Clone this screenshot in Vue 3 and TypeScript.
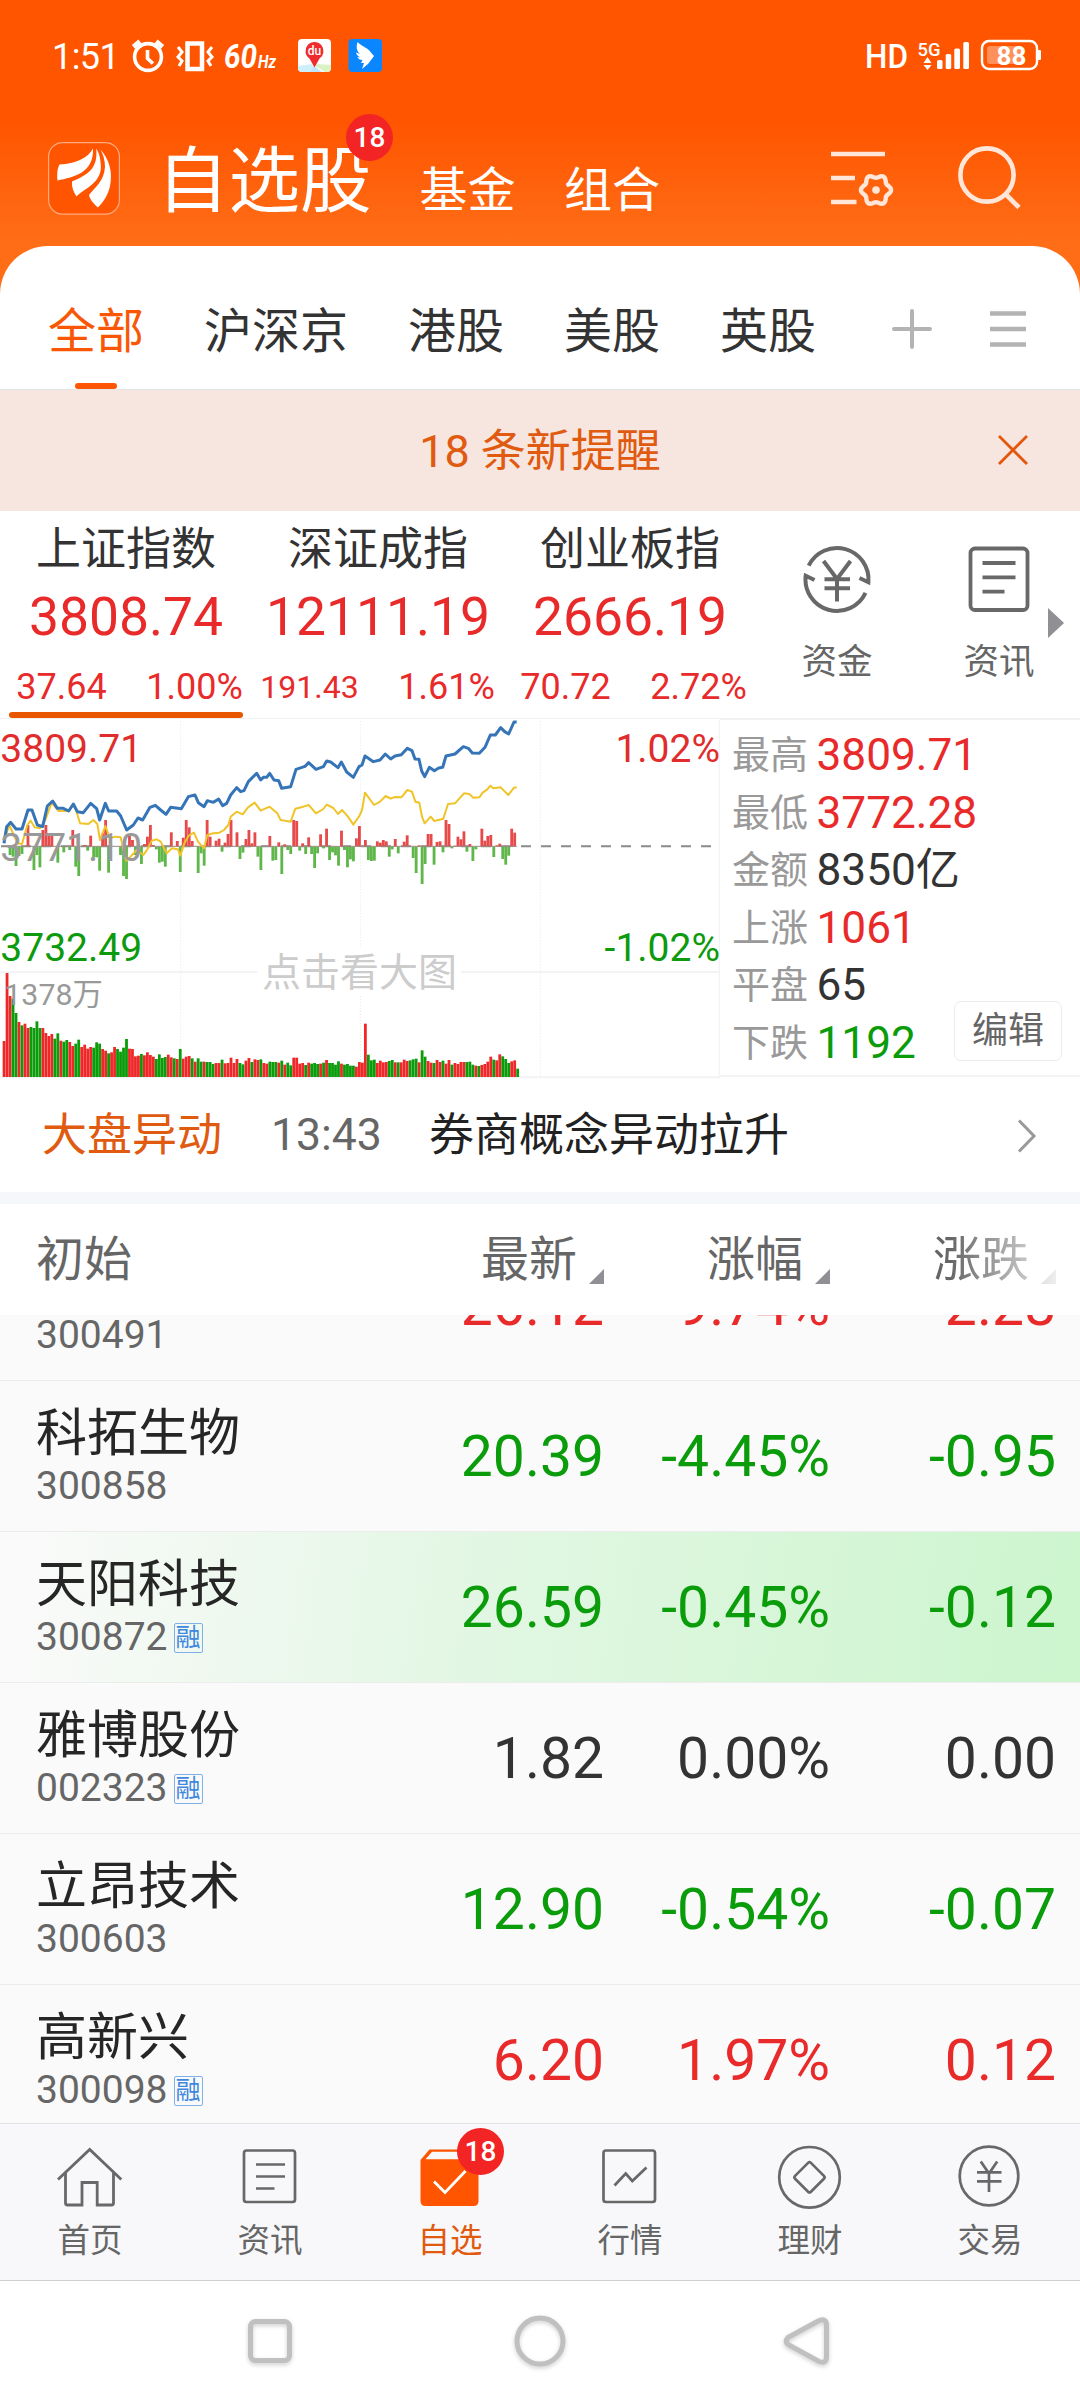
<script setup lang="ts">
interface Tone {
  tone: 'up' | 'down' | 'flat'
}
interface IndexQuote {
  name: string
  value: string
  diff: string
  pct: string
  small?: boolean
}
interface Stat extends Tone {
  label: string
  value: string
}
interface Stock extends Tone {
  name: string
  code: string
  margin?: boolean
  price: string
  pct: string
  diff: string
  flash?: boolean
}

const groups: string[] = ['全部', '沪深京', '港股', '美股', '英股']

const indices: IndexQuote[] = [
  { name: '上证指数', value: '3808.74', diff: '37.64', pct: '1.00%' },
  { name: '深证成指', value: '12111.19', diff: '191.43', pct: '1.61%', small: true },
  { name: '创业板指', value: '2666.19', diff: '70.72', pct: '2.72%' },
]

const stats: Stat[] = [
  { label: '最高', value: '3809.71', tone: 'up' },
  { label: '最低', value: '3772.28', tone: 'up' },
  { label: '金额', value: '8350亿', tone: 'flat' },
  { label: '上涨', value: '1061', tone: 'up' },
  { label: '平盘', value: '65', tone: 'flat' },
  { label: '下跌', value: '1192', tone: 'down' },
]

const stocks: Stock[] = [
  { name: '', code: '300491', price: '26.12', pct: '9.74%', diff: '2.28', tone: 'up' },
  { name: '科拓生物', code: '300858', price: '20.39', pct: '-4.45%', diff: '-0.95', tone: 'down' },
  { name: '天阳科技', code: '300872', margin: true, price: '26.59', pct: '-0.45%', diff: '-0.12', tone: 'down', flash: true },
  { name: '雅博股份', code: '002323', margin: true, price: '1.82', pct: '0.00%', diff: '0.00', tone: 'flat' },
  { name: '立昂技术', code: '300603', price: '12.90', pct: '-0.54%', diff: '-0.07', tone: 'down' },
  { name: '高新兴', code: '300098', margin: true, price: '6.20', pct: '1.97%', diff: '0.12', tone: 'up' },
]

// Width of one trading minute in chart units (240 minutes across the plot).
const MINUTE = 8.958

// Per-minute turnover; a trailing g marks a falling minute.
const volume = (
  '108 312 243 235g 192g 165 155g 160 147 150g 147g 167g 147g 147 132 123 129 115g 131g 109 106g 111g 105 93 100g 112g 90 97 85 90 ' +
  '88g 104g 100g 84 79 71g 74 90 84g 76g 88g 114g 85 84 62 64 69g 65 74 66 61 54g 68g 57g 60g 67 59 56g 54 84g 55 61 63 56g 46 56g ' +
  '46g 46 45g 45g 39g 42 42 52g 41 42 58 42 54 42g 38g 49 57 45g 53 51 53g 42 40 46g 45g 45g 43 49g 37 43g 35g 58 58 40 42 36g 43 ' +
  '40g 42g 39g 40 43g 51 42g 42g 37g 47g 40 37g 39g 34g 34g 31 45 43 160 67g 50g 52g 42 49 44 45 48g 51g 44 44g 44 52 48 50g 53g ' +
  '55g 44 80g 61g 48 43 42g 51 45 49g 40 51 37g 42 39 45 45 45g 46g 37g 34 33g 36 39 46 61 52g 50 68 62g 54g 42g 47 50 25g'
)
  .split(' ')
  .map((token, i) => ({ x: 8 + MINUTE * i, h: parseInt(token), down: token.endsWith('g') }))

// Net momentum around the previous close.
const momentum = (
  '0 0 -25 -30 -58 -28 -22 0 65 0 -70 -25 -62 50 65 40 32 0 -48 0 -17 0 -10 50 -60 -88 0 5 -12 33 -32 -32 -72 40 80 -78 0 0 0 -25 ' +
  '-88 -97 32 20 -25 0 -52 8 30 65 5 -8 -48 -45 -60 0 43 0 17 -76 27 80 58 17 0 -79 -20 -57 80 30 0 18 24 -15 12 38 80 0 43 -37 -18 ' +
  '23 50 10 43 -30 -70 0 0 32 -42 -40 13 -82 7 -10 -22 80 77 -12 10 -22 28 -22 -64 -20 37 -5 54 -40 -17 -26 -57 48 -10 -62 -38 -44 ' +
  '25 62 0 20 -40 -43 -42 16 12 20 16 -30 -8 23 -20 0 15 34 0 -34 -79 4 -112 -52 38 38 -54 14 16 -17 80 68 -5 3 30 22 46 -15 8 -43 ' +
  '-8 0 54 18 32 35 -31 4 9 -37 -54 -27 54 42'
)
  .split(' ')
  .map(Number)
  .map((v, i) => ({ x: 8 + MINUTE * i, v }))
  .filter((bar) => bar.v !== 0)

const priceLine =
  '12,400 20,350 32,337 48,357 66,357 84,300 96,300 112,345 128,350 142,288 158,273 172,295 190,295 206,303 220,282 232,305 250,308 ' +
  '272,280 290,296 299,330 316,280 326,303 350,303 362,318 380,360 400,345 414,324 428,330 450,292 466,286 482,300 498,313 512,292 ' +
  '544,296 565,260 585,255 595,278 612,290 622,272 640,277 656,267 668,287 680,280 692,255 710,233 722,245 732,242 745,215 770,190 ' +
  '782,210 790,202 800,202 809,190 822,210 836,212 845,235 872,230 888,178 915,169 926,158 948,178 970,170 980,153 992,156 1014,173 ' +
  '1024,156 1040,186 1060,202 1077,170 1086,165 1095,138 1120,155 1140,150 1156,132 1172,147 1185,138 1204,134 1222,115 1236,122 ' +
  '1245,147 1257,148 1265,183 1274,200 1288,172 1303,182 1316,174 1328,172 1338,138 1365,132 1390,110 1405,115 1417,129 1438,130 ' +
  '1455,112 1471,75 1486,75 1502,53 1514,65 1526,72 1542,36 1550,36'

const averageLine =
  '12,392 28,345 40,372 52,400 66,402 82,345 92,332 104,352 120,355 136,330 155,278 176,303 206,303 220,285 228,300 240,340 265,342 ' +
  '280,330 292,342 300,390 316,348 330,385 345,380 362,382 376,445 380,452 392,440 410,420 430,435 442,418 455,392 470,388 482,395 ' +
  '500,430 516,415 534,418 541,437 553,400 566,377 582,368 594,395 612,415 622,375 640,370 658,368 672,360 685,345 692,320 710,305 ' +
  '728,313 744,292 764,278 782,302 809,290 832,310 842,330 872,335 886,296 910,290 926,285 948,310 970,297 980,284 1000,294 ' +
  '1014,312 1026,300 1044,320 1060,344 1078,318 1086,300 1095,248 1122,285 1140,275 1157,258 1172,266 1185,261 1204,262 1222,240 ' +
  '1236,245 1246,275 1258,278 1266,320 1274,340 1292,320 1303,333 1330,326 1344,282 1365,280 1392,250 1408,252 1420,263 1438,262 ' +
  '1448,248 1462,238 1471,227 1480,235 1502,232 1525,255 1542,233 1550,232'

// Six-lobed outline of the settings gear.
const gear = Array.from({ length: 72 }, (_, i) => {
  const a = (i * Math.PI) / 36
  const r = 13.5 + 1.6 * Math.cos(6 * a)
  return `${(876 + r * Math.cos(a)).toFixed(2)},${(190 + r * 1.02 * Math.sin(a)).toFixed(2)}`
}).join(' ')
</script>

<template>
  <div class="app">
    <header class="hero">
      <div class="status">
        <span class="clock">1:51</span>
        <svg class="st-left" width="270" height="40" viewBox="128 36 270 40">
          <g fill="none" stroke="#fff" stroke-width="3.6">
            <circle cx="148" cy="57" r="13.4" />
            <path d="M147.500 50v8.500l5.500 5" />
            <path d="M133.500 47l6.500-5.500M162.500 47l-6.500-5.500" stroke-width="5" />
            <rect x="187.500" y="43.500" width="14.500" height="25.500" stroke-width="4.500" />
            <path d="M178 47l4 5-4 5 4 4-3 5M212 47l-4 5 4 5-4 4 3 5" stroke-width="3" />
          </g>
          <text x="224" y="68" class="hz" font-size="34" textLength="33" lengthAdjust="spacingAndGlyphs">60</text>
          <text x="258" y="68" class="hz" font-size="18" textLength="18" lengthAdjust="spacingAndGlyphs">Hz</text>
          <rect x="298" y="39" width="33" height="33" rx="4" fill="#fff" />
          <path d="M298 66l14-2 4 8h-14q-4 0-4-4z" fill="#cdeefb" />
          <path d="M331 65l-14-1-2 2 10 6h2q4 0 4-4z" fill="#d9f3c4" />
          <path d="M310 72l4-6 8 6z" fill="#bfe6fb" />
          <path d="M314.500 67.500l-5-9a9 9 0 1 1 10 0z" fill="#ef2b2d" />
          <text x="314.500" y="55" class="du" text-anchor="middle">du</text>
          <rect x="348.500" y="39" width="33.500" height="33" rx="4" fill="#0a87ff" />
          <path d="M357.500 42c5 5 12 7 13 10l3.500 4-6 8-6 5 2-6h-3l1.500-3q-4 0-5-3l3 .5q-4-2-4.500-5l4 1.500q-5-4-2.500-12z" fill="#fff" />
        </svg>
        <span class="push"></span>
        <svg class="st-right" width="180" height="40" viewBox="864 36 180 40">
          <text x="865" y="68" class="hd" font-size="34" textLength="43" lengthAdjust="spacingAndGlyphs">HD</text>
          <text x="917.500" y="55.500" class="hd" font-size="18.500" textLength="23" lengthAdjust="spacingAndGlyphs">5G</text>
          <g fill="#fff">
            <path d="M923.500 63l4-6 4 6zM923.500 65h8l-4 5z" />
            <rect x="937" y="60" width="5.500" height="9" rx="1.500" />
            <rect x="945.700" y="54" width="5.500" height="15" rx="1.500" />
            <rect x="954.300" y="48.500" width="5.700" height="20.500" rx="1.500" />
            <rect x="963.300" y="42" width="5.700" height="27" rx="1.500" />
            <rect x="1037.500" y="50" width="3.500" height="10" rx="1" />
            <rect x="987" y="46" width="36" height="18" rx="3" opacity=".35" />
          </g>
          <rect x="982" y="41" width="55" height="28" rx="7" fill="none" stroke="#fff" stroke-width="2.400" />
          <text x="996.500" y="65" class="bat">88</text>
        </svg>
      </div>

      <div class="titlebar">
        <svg class="logo" width="72" height="73" viewBox="0 0 72 73">
          <rect x=".6" y=".6" width="70.800" height="71.500" rx="14" fill="#ff5500" stroke="#ffab80" stroke-width="1.200" />
          <g fill="#fff">
            <path d="M45 6.500C41 15 28 22 11.500 22.500C9 27 9 33 9.500 38.500C26 35 46 31 45 6.500z" />
            <path d="M48.200 6.500C50 25 42 32 24 39.500C23.500 45 25.500 50 28.500 54.500C36 46 56 41 52.500 20C52 14 50.500 10 48.200 6.500z" />
            <path d="M52.500 7.500C61 17 65 30 62 44C60 53 56 59 50 65.500C46 62 42 58 41 53C46 46 56 40 57 25C57 18 55 12 52.500 7.500z" />
          </g>
        </svg>
        <div class="main-title">自选股<span class="badge">18</span></div>
        <span class="sub-title">基金</span>
        <span class="sub-title">组合</span>
        <span class="push"></span>
        <svg width="64" height="60" viewBox="831 148 64 60" fill="none" stroke="#ffe6d8" stroke-width="4.400">
          <path d="M831 154h54M831 178h24M831 202h25.500" />
          <polygon :points="gear" stroke-linejoin="round" />
          <circle cx="876" cy="190" r="3.800" fill="#ffe6d8" stroke="none" />
        </svg>
        <svg class="search" width="64" height="66" viewBox="957 144 64 66" fill="none" stroke="#ffe6d8" stroke-width="4.600">
          <circle cx="987" cy="175" r="26.600" />
          <path d="M1005.500 194l13.500 13.500" />
        </svg>
      </div>
    </header>

    <nav class="groups">
      <span v-for="(g, i) in groups" :key="g" class="group" :class="{ on: i === 0 }">{{ g }}</span>
      <span class="push"></span>
      <svg width="40" height="40" viewBox="0 0 40 40" stroke="#b3b3b3" stroke-width="4" stroke-linecap="round"><path d="M2 20h36M20 2v36" /></svg>
      <svg class="burger" width="38" height="40" viewBox="0 0 38 40" stroke="#b3b3b3" stroke-width="4.600"><path d="M1 4.500h36M1 20h36M1 35.500h36" /></svg>
    </nav>

    <div class="alert">
      <span>18 条新提醒</span>
      <svg class="close" width="32" height="32" viewBox="0 0 32 32" stroke="#e4570b" stroke-width="2.800"><path d="M2 2l28 28M30 2L2 30" /></svg>
    </div>

    <section class="indices">
      <div v-for="(q, i) in indices" :key="q.name" class="index" :class="{ on: i === 0 }">
        <div class="index-name">{{ q.name }}</div>
        <div class="index-value">{{ q.value }}</div>
        <div class="index-sub">
          <span :class="{ small: q.small }">{{ q.diff }}</span>
          <span>{{ q.pct }}</span>
        </div>
      </div>
      <div class="tool">
        <svg width="72" height="72" viewBox="0 0 72 72" fill="none" stroke="#686868" stroke-width="4">
          <path d="M7.700 22.700A31.500 31.500 0 0 1 67.400 39.200L58.500 35" />
          <path d="M64.500 49.800A31.500 31.500 0 0 1 4.700 32.700L13.500 37" />
          <path d="M22.500 18L36 36L49.500 18M23.500 36.300h25.500M23.500 45.300h25.500M36 36v22.500" />
        </svg>
        <span>资金</span>
      </div>
      <div class="tool second">
        <svg width="72" height="72" viewBox="0 0 72 72" fill="none" stroke="#686868" stroke-width="3.800">
          <rect x="7.500" y="5.500" width="57" height="61.500" rx="4.500" />
          <path d="M19.500 20h33M19.500 34.300h33M19.500 48.700h22" />
        </svg>
        <span>资讯</span>
      </div>
      <svg class="more" width="16" height="30" viewBox="0 0 16 30"><path d="M0 0l16 15L0 30z" fill="#8f8f94" /></svg>
    </section>

    <section class="market">
      <svg class="chart" width="720" height="361" viewBox="0 27 2160 1083">
        <g fill="none" stroke="#f3f3f5" stroke-width="6">
          <path d="M0 786H772M1382 786H2160M0 1102H2160M2159 30V1102" />
        </g>
        <g stroke="#e6e6e6" stroke-width="3" stroke-dasharray="3 6">
          <path d="M542 34V1098M1081 34V715M1081 858V1098M1621 34V1098" />
        </g>
        <path d="M3 409H2133" stroke="#8a8a8a" stroke-width="6" stroke-dasharray="30 30" />
        <rect v-for="b in momentum" :key="'m' + b.x" :x="b.x" :y="b.v > 0 ? 410 - b.v : 410" width="8.500" :height="Math.abs(b.v)" :fill="b.v > 0 ? '#e64a4a' : '#5fb64a'" />
        <path d="M8 409H1550" stroke="#9a8a80" stroke-width="3" />
        <rect v-for="b in volume" :key="'v' + b.x" :x="b.x" :y="1101 - b.h" width="8.400" :height="b.h" :fill="b.down ? '#0a9c0a' : '#ee2828'" />
        <polyline :points="averageLine" fill="none" stroke="#f0c428" stroke-width="6" stroke-linejoin="round" />
        <polyline :points="priceLine" fill="none" stroke="#3674b8" stroke-width="9" stroke-linejoin="round" />
        <g class="chart-text" font-size="117">
          <text x="1" y="156" fill="#e02c2c">3809.71</text>
          <text x="2160" y="156" fill="#e02c2c" text-anchor="end">1.02%</text>
          <text x="1" y="752" fill="#0d9a0d">3732.49</text>
          <text x="2160" y="752" fill="#0d9a0d" text-anchor="end">-1.02%</text>
          <text x="1" y="452" fill="#999">3771.10</text>
          <text x="13" y="885" fill="#999" font-size="91">1378万</text>
          <text x="786" y="829" fill="#ccc">点击看大图</text>
        </g>
      </svg>
      <div class="stats">
        <div v-for="s in stats" :key="s.label" class="stat">
          <span class="stat-label">{{ s.label }}</span>
          <span :class="s.tone">{{ s.value }}</span>
        </div>
        <button class="edit">编辑</button>
      </div>
    </section>

    <section class="news">
      <span class="news-tag">大盘异动</span>
      <span class="news-time">13:43</span>
      <span class="news-text">券商概念异动拉升</span>
      <span class="push"></span>
      <svg width="20" height="34" viewBox="0 0 20 34" fill="none" stroke="#999" stroke-width="3"><path d="M2 1.500L17 17L2 32.500" /></svg>
    </section>

    <section class="thead">
      <span class="c-name">初始</span>
      <span class="c-num">最新<i class="tri"></i></span>
      <span class="c-num">涨幅<i class="tri"></i></span>
      <span class="c-num fade">涨跌<i class="tri"></i></span>
    </section>

    <main class="list">
      <div v-for="s in stocks" :key="s.code" class="row" :class="{ flash: s.flash }">
        <div class="c-name">
          <div class="name">{{ s.name }}</div>
          <div class="code">{{ s.code }}<span v-if="s.margin" class="margin">融</span></div>
        </div>
        <span class="c-num" :class="s.tone">{{ s.price }}</span>
        <span class="c-num" :class="s.tone">{{ s.pct }}</span>
        <span class="c-num" :class="s.tone">{{ s.diff }}</span>
      </div>
    </main>

    <nav class="tabbar">
      <div class="tab">
        <svg width="72" height="70" viewBox="0 0 72 70" fill="none" stroke="#686868" stroke-width="2.800">
          <path d="M4 37.500L35.700 7.500L67.300 37.500" />
          <path d="M11.500 31V61q0 2 2 2H28V40.500H43.200V63H57.500q2 0 2-2V31" />
        </svg>
        <span>首页</span>
      </div>
      <div class="tab">
        <svg width="72" height="70" viewBox="0 0 72 70" fill="none" stroke="#686868" stroke-width="2.700">
          <rect x="10" y="8.500" width="51" height="51.500" rx="2.500" />
          <path d="M22 22.500h29M22 34.500h29M22 46.500h18.500" />
        </svg>
        <span>资讯</span>
      </div>
      <div class="tab on">
        <svg width="72" height="70" viewBox="0 0 72 70">
          <path d="M6.500 18L15.500 7.500H56L64.500 18V59q0 5-5 5H11.500q-5 0-5-5z" fill="#ff5500" />
          <path d="M11.500 17.300L18 9.800H53L59 17.300z" fill="#f8f8fa" />
          <path d="M20 39.500L31 50.500L51.500 29" fill="none" stroke="#fff" stroke-width="2.800" />
        </svg>
        <span>自选</span>
        <span class="badge">18</span>
      </div>
      <div class="tab">
        <svg width="72" height="70" viewBox="0 0 72 70" fill="none" stroke="#686868" stroke-width="2.700">
          <rect x="9.500" y="8.500" width="51.500" height="51.500" rx="2.500" />
          <path d="M20.500 43.500L31.700 31.500L38.300 39L52.500 25.500" />
        </svg>
        <span>行情</span>
      </div>
      <div class="tab">
        <svg width="72" height="70" viewBox="0 0 72 70" fill="none" stroke="#686868" stroke-width="2.700">
          <circle cx="35.500" cy="35.300" r="30.300" />
          <rect x="24.300" y="24.100" width="22.400" height="22.400" rx="2" transform="rotate(45 35.500 35.300)" />
        </svg>
        <span>理财</span>
      </div>
      <div class="tab">
        <svg width="72" height="70" viewBox="0 0 72 70" fill="none" stroke="#686868" stroke-width="2.700">
          <circle cx="35" cy="34" r="29.300" />
          <path d="M26.800 19.500L35 31.500L43.200 19.500M23 30.400h24.500M23 39.400h24.500M35 31v19" />
        </svg>
        <span>交易</span>
      </div>
    </nav>

    <footer class="sysnav">
      <svg width="60" height="60" viewBox="0 0 60 60"><rect x="10.500" y="10.500" width="39" height="39" rx="5" /></svg>
      <svg width="60" height="60" viewBox="0 0 60 60"><circle cx="30" cy="30" r="23" /></svg>
      <svg width="60" height="60" viewBox="0 0 60 60"><path d="M8 26.500L39 9.500Q46.500 7 46.500 14V46Q46.500 53 39 50.500L8 33.500Q4.500 30 8 26.500z" /></svg>
    </footer>
  </div>
</template>

<style>
body {
  background: #fff;
}
</style>

<style scoped>
.app {
  width: 1080px;
  height: 2400px;
  overflow: hidden;
  background: #fff;
  color: #333;
  font-family: Roboto, "Noto Sans CJK SC", sans-serif;
  display: flex;
  flex-direction: column;
}
.app > * {
  flex: none;
}
svg {
  display: block;
  flex: none;
}
.push {
  flex: 1;
}
.up {
  color: #e92a2a;
}
.down {
  color: #0a9c0a;
}
.flat {
  color: #333;
}

.hero {
  height: 300px;
  background: linear-gradient(#ff5500 0, #ff5500 122px, #ff6d17 242px, #ff6d17 100%);
  color: #fff;
}
.status {
  height: 112px;
  display: flex;
  padding: 0 36px 0 52px;
}
.clock {
  width: 76px;
  font-size: 36px;
  line-height: 115px;
  white-space: nowrap;
  letter-spacing: -0.600px;
}
.st-left,
.st-right {
  margin-top: 36px;
}
.hz {
  fill: #fff;
  font-weight: 700;
  font-style: italic;
}
.hd {
  fill: #fff;
  font-weight: 500;
}
.du {
  fill: #fff;
  font-size: 12px;
  font-weight: 500;
}
.bat {
  fill: #fff;
  font-size: 26px;
  font-weight: 700;
}
.titlebar {
  display: flex;
  align-items: flex-start;
  padding: 30px 59px 0 48px;
}
.main-title {
  position: relative;
  margin-left: 37px;
  width: 214px;
  font-size: 71.500px;
  line-height: 79px;
  white-space: nowrap;
}
.badge {
  position: absolute;
  width: 47px;
  height: 47px;
  border-radius: 50%;
  background: #f22424;
  color: #fff;
  font-size: 28px;
  font-weight: 500;
  line-height: 48px;
  text-align: center;
}
.main-title .badge {
  left: 189px;
  top: -28px;
}
.sub-title {
  width: 96px;
  margin-left: 48.500px;
  font-size: 48px;
  line-height: 97px;
  white-space: nowrap;
}
.titlebar > svg:not(.logo) {
  margin-top: 6px;
}
.titlebar > svg.search {
  margin: 2px 0 0 62px;
}

.groups {
  height: 144px;
  margin-top: -54px;
  box-sizing: border-box;
  border-bottom: 1px solid #e4e6ea;
  border-radius: 48px 48px 0 0;
  background: #fff;
  display: flex;
  align-items: flex-start;
  padding: 0 53px 0 48px;
}
.group {
  margin-right: 60px;
  font-size: 48px;
  line-height: 171px;
  height: 143px;
  white-space: nowrap;
}
.group.on {
  color: #f95706;
  display: flex;
  flex-direction: column;
  align-items: center;
}
.group.on::after {
  content: "";
  width: 42px;
  height: 6px;
  margin-top: -34px;
  border-radius: 3px;
  background: #ff5500;
}
.groups svg {
  margin-top: 63px;
}
.groups .burger {
  margin-left: 57px;
}

.alert {
  height: 121px;
  background: #f6e6df;
  color: #e05a10;
  font-size: 45px;
  line-height: 123px;
  text-align: center;
  position: relative;
}
.close {
  position: absolute;
  left: 997px;
  top: 44px;
}

.indices {
  height: 207px;
  display: flex;
  position: relative;
}
.index {
  width: 252px;
  text-align: center;
  color: #e92a2a;
  display: flex;
  flex-direction: column;
}
.index-name {
  color: #333;
  font-size: 45px;
  line-height: 60px;
  margin-top: 9px;
}
.index-value {
  font-size: 53.400px;
  line-height: 70px;
  margin-top: 2px;
}
.index-sub {
  display: flex;
  font-size: 36px;
  line-height: 60px;
  margin: 5px 0 0 -3px;
}
.index-sub span {
  flex: none;
  width: 129px;
}
.index-sub span + span {
  margin-left: 4px;
}
.index-sub .small {
  font-size: 32px;
  width: 121px;
  margin-right: 8px;
}
.index.on::after {
  content: "";
  width: 234px;
  height: 6px;
  margin: -5px 0 0 9px;
  border-radius: 3px;
  background: #e85600;
}
.tool {
  width: 72px;
  margin: 32px 0 0 45px;
  display: flex;
  flex-direction: column;
  align-items: center;
  color: #666;
  font-size: 35.500px;
  line-height: 60px;
}
.tool span {
  margin-top: 17px;
  white-space: nowrap;
}
.tool.second {
  margin-left: 90px;
}
.more {
  position: absolute;
  left: 1048px;
  top: 97px;
}

.market {
  height: 361px;
  display: flex;
  border-top: 1px solid #f1f1f3;
  box-sizing: border-box;
}
.chart-text {
  font-family: Roboto, "Noto Sans CJK SC", sans-serif;
}
.stats {
  position: relative;
  flex: 1;
  height: 358px;
  border-bottom: 2px solid #f3f3f5;
  box-sizing: border-box;
  border-top: 1px solid #f3f3f5;
  padding: 6px 0 0 12px;
}
.stat {
  display: flex;
  height: 57.600px;
  line-height: 58px;
  font-size: 44.200px;
}
.stat-label {
  width: 84.500px;
  font-size: 38px;
  color: #999;
}
.edit {
  position: absolute;
  right: 18px;
  bottom: 14px;
  width: 108px;
  height: 60px;
  padding: 0;
  border: 1.500px solid #ececee;
  border-radius: 7px;
  background: #fff;
  color: #666;
  font: 36px/57px Roboto, "Noto Sans CJK SC", sans-serif;
}

.news {
  height: 113px;
  display: flex;
  align-items: center;
  padding: 0 43px 0 42px;
  font-size: 45px;
  line-height: 113px;
  border-bottom: 12px solid #f6f7fa;
}
.news-tag {
  width: 229px;
  color: #e05a10;
}
.news-time {
  width: 158px;
  color: #666;
  font-size: 44.500px;
}
.news-text {
  color: #222;
}

.thead {
  height: 111px;
  display: flex;
  color: #666;
  font-size: 48px;
  line-height: 111px;
  padding: 0 24px 0 36px;
}
.c-name {
  flex: 1;
}
.c-num {
  width: 226px;
  text-align: right;
  white-space: nowrap;
}
.thead .c-num {
  display: flex;
  justify-content: flex-end;
}
.thead .tri {
  width: 15px;
  height: 15px;
  margin: 65px 0 0 12px;
  background: #8f8f94;
  clip-path: polygon(100% 0, 100% 100%, 0 100%);
}
.thead .fade {
  -webkit-mask-image: linear-gradient(90deg, #000 53%, rgba(0, 0, 0, 0.15) 100%);
  mask-image: linear-gradient(90deg, #000 53%, rgba(0, 0, 0, 0.15) 100%);
}

.list {
  height: 808px;
  overflow: hidden;
  background: #fafafa;
  display: flex;
  flex-direction: column;
}
.row {
  flex: none;
  height: 151px;
  box-sizing: border-box;
  border-bottom: 1.500px solid #ececec;
  display: flex;
  padding: 0 24px 0 36px;
}
.row:first-child {
  margin-top: -85px;
}
.row.flash {
  background: linear-gradient(98deg, #fafafa 2%, #e3f7e4 42%, #cdf5ce 98%);
}
.row .c-num {
  font-size: 57px;
  line-height: 151px;
}
.name {
  margin-top: 23px;
  height: 60px;
  font-size: 51px;
  line-height: 60px;
  color: #262626;
}
.code {
  display: flex;
  align-items: center;
  font-size: 39px;
  line-height: 44px;
  color: #666;
}
.margin {
  margin: 2px 0 0 6px;
  width: 29px;
  height: 30px;
  box-sizing: border-box;
  border: 1.500px solid #7fb0e6;
  border-radius: 2px;
  color: #3f88de;
  font-size: 25px;
  line-height: 27px;
  display: flex;
  justify-content: center;
}

.tabbar {
  height: 158px;
  box-sizing: border-box;
  border-top: 1px solid #e3e3e3;
  border-bottom: 1px solid #cfcfcf;
  background: #f8f8fa;
  display: flex;
}
.tab {
  position: relative;
  width: 180px;
  display: flex;
  flex-direction: column;
  align-items: center;
  padding-top: 18px;
  color: #666;
  font-size: 32.500px;
  line-height: 50px;
}
.tab > span:not(.badge) {
  margin-top: 4px;
}
.tab.on {
  color: #e05a10;
}
.tab .badge {
  left: 97px;
  top: 4px;
}

.sysnav {
  height: 119px;
  display: flex;
  justify-content: center;
  align-items: center;
  gap: 210px;
}
.sysnav svg {
  fill: none;
  stroke: #c0c0c0;
  stroke-width: 5;
  filter: drop-shadow(0 2px 2px rgba(0, 0, 0, 0.18));
}
</style>
